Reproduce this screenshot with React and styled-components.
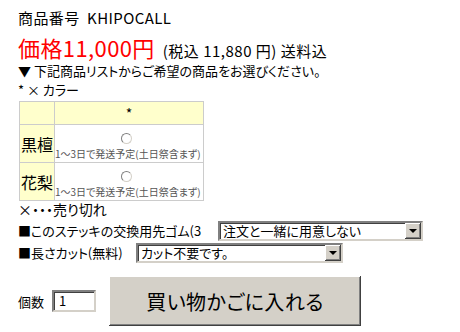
import React from "react";
import styled, { createGlobalStyle } from "styled-components";

const GlobalStyle = createGlobalStyle`
    body {
        margin: 0;
        background: #fff;
        color: #000;
        font-family: "Noto Sans CJK JP", "Noto Sans", sans-serif;
        font-feature-settings: "palt";
    }
`;

const Page = styled.div`
    padding: 8px 0 0 18px;
    width: 442px;
`;

const ProductCode = styled.div`
    font-size: 15px;
    line-height: 20px;
    letter-spacing: 0.4px;
`;

const PriceLine = styled.div`
    display: flex;
    align-items: baseline;
    margin-top: 5px;
    height: 28px;
`;

const Price = styled.span`
    color: #ff0000;
    font-size: 22px;
    line-height: 28px;
    letter-spacing: 0.4px;
`;

const Tax = styled.span`
    font-size: 15px;
    line-height: 28px;
    margin-left: 8px;
    letter-spacing: 0.5px;
`;

const TextLine = styled.div`
    font-size: ${(p) => p.size || 13}px;
    line-height: ${(p) => p.lh || 19}px;
    height: ${(p) => p.lh || 19}px;
`;

const OptionTable = styled.table`
    border-collapse: collapse;
    width: 185px;
    margin: 3px 0 0 1px;
    font-size: 16px;

    td {
        border: 1px solid #cccccc;
        padding: 0;
    }
`;

const HeadCell = styled.td`
    background: #ffffcc;
    height: 22px;
    text-align: center;
    font-size: 14px;
`;

const NameCell = styled.td`
    background: #ffffcc;
    width: 34px;
    text-align: center;
    height: 37px;
`;

const ChoiceCell = styled.td`
    text-align: center;
    vertical-align: bottom;
`;

const Radio = styled.span`
    display: block;
    width: 9px;
    height: 9px;
    margin: 0 auto 3px;
    border-radius: 50%;
    border: 1px solid;
    border-color: #808080 #d4d0c8 #d4d0c8 #808080;
    transform: translateX(-3px);
`;

const ShipNote = styled.div`
    font-size: 10px;
    line-height: 13px;
    color: #555;
    white-space: nowrap;
    text-align: left;
    padding-bottom: 2px;
`;

const OptionRow = styled.div`
    display: flex;
    align-items: center;
    height: 21px;
    font-size: 13px;
    margin-top: ${(p) => p.gap || 0}px;
`;

const OptionLabel = styled.span`
    width: ${(p) => p.w}px;
    white-space: nowrap;
`;

const ComboBox = styled.div`
    display: flex;
    align-items: center;
    width: ${(p) => p.w}px;
    height: 20px;
    box-sizing: border-box;
    border: 2px solid;
    border-color: #808080 #d4d0c8 #d4d0c8 #808080;
    box-shadow: inset 1px 1px 0 #404040;
    background: #fff;
`;

const ComboText = styled.span`
    flex: 1;
    padding-left: 3px;
    font-size: 13px;
    line-height: 16px;
`;

const ComboArrow = styled.span`
    width: 16px;
    height: 16px;
    box-sizing: border-box;
    background: #d4d0c8;
    box-shadow: inset -1px -1px 0 #404040, inset 1px 1px 0 #fff, inset -2px -2px 0 #808080;
    display: flex;
    align-items: center;
    justify-content: center;

    &::after {
        content: "";
        border-left: 4px solid transparent;
        border-right: 4px solid transparent;
        border-top: 4px solid #000;
        margin-top: 1px;
    }
`;

const CartRow = styled.div`
    display: flex;
    align-items: center;
    margin-top: 13px;
    height: 50px;
`;

const QtyLabel = styled.span`
    font-size: 13px;
    margin-right: 8px;
`;

const QtyInput = styled.div`
    width: 44px;
    height: 22px;
    box-sizing: border-box;
    border: 2px solid;
    border-color: #808080 #d4d0c8 #d4d0c8 #808080;
    box-shadow: inset 1px 1px 0 #404040;
    font-size: 13px;
    line-height: 18px;
    padding-left: 5px;
`;

const CartButton = styled.button`
    margin-left: 13px;
    width: 252px;
    height: 50px;
    background: #d4d0c8;
    border: none;
    box-shadow: inset -1px -1px 0 #404040, inset 1px 1px 0 #fff, inset -2px -2px 0 #808080;
    font-family: inherit;
    font-feature-settings: "palt";
    font-size: 20px;
    letter-spacing: 0.5px;
    color: #000;
    padding: 0;
`;

const colors = [
    { name: "黒檀" },
    { name: "花梨" },
];

const App = () => (
    <>
        <GlobalStyle />
        <Page>
            <ProductCode>商品番号&nbsp; KHIPOCALL</ProductCode>
            <PriceLine>
                <Price>価格11,000円</Price>
                <Tax>(税込 11,880 円) 送料込</Tax>
            </PriceLine>
            <TextLine lh={20}>▼ 下記商品リストからご希望の商品をお選びください。</TextLine>
            <TextLine lh={17}>* × カラー</TextLine>
            <OptionTable>
                <tbody>
                    <tr>
                        <HeadCell />
                        <HeadCell>*</HeadCell>
                    </tr>
                    {colors.map((c) => (
                        <tr key={c.name}>
                            <NameCell>{c.name}</NameCell>
                            <ChoiceCell>
                                <Radio />
                                <ShipNote>1〜3日で発送予定(土日祭含まず)</ShipNote>
                            </ChoiceCell>
                        </tr>
                    ))}
                </tbody>
            </OptionTable>
            <TextLine size={14} lh={16}>×・・・売り切れ</TextLine>
            <OptionRow gap={3}>
                <OptionLabel w={200}>■このステッキの交換用先ゴム(3</OptionLabel>
                <ComboBox w={205}>
                    <ComboText>注文と一緒に用意しない</ComboText>
                    <ComboArrow />
                </ComboBox>
            </OptionRow>
            <OptionRow gap={1}>
                <OptionLabel w={118}>■長さカット(無料)</OptionLabel>
                <ComboBox w={207}>
                    <ComboText>カット不要です。</ComboText>
                    <ComboArrow />
                </ComboBox>
            </OptionRow>
            <CartRow>
                <QtyLabel>個数</QtyLabel>
                <QtyInput>1</QtyInput>
                <CartButton>買い物かごに入れる</CartButton>
            </CartRow>
        </Page>
    </>
);

export default App;
